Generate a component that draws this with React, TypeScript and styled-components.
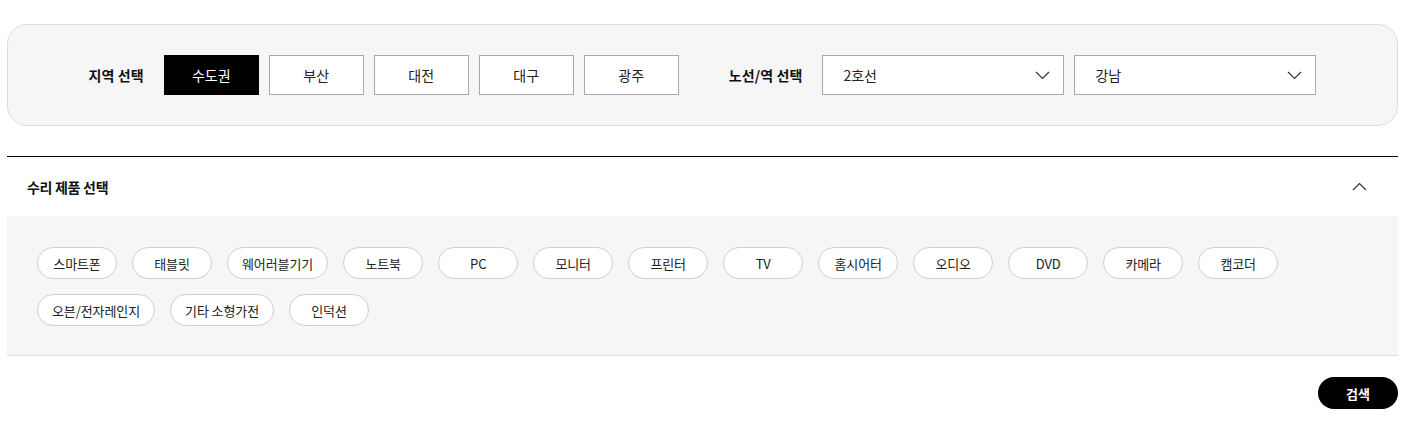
import React, { useState } from 'react';
import styled, { createGlobalStyle } from 'styled-components';

const GlobalStyle = createGlobalStyle`
  body {
    margin: 0;
    background: #fff;
    font-family: 'Noto Sans CJK KR', 'Noto Sans', sans-serif;
    color: #111;
  }
  * { box-sizing: border-box; }
`;

const Page = styled.div`
  padding: 24px 14px 0 7px;
`;

const FilterPanel = styled.div`
  height: 102px;
  background: #f6f6f6;
  border: 1px solid #dcdcdc;
  border-radius: 20px;
  display: flex;
  align-items: center;
  justify-content: center;
`;

const FilterGroup = styled.div`
  display: flex;
  align-items: center;
  gap: 10px;
  & + & { margin-left: 50px; }
`;

const Label = styled.span`
  font-size: 14px;
  font-weight: 700;
  letter-spacing: 0.1px;
  margin-right: 10px;
`;

const RegionButton = styled.button<{ $active?: boolean }>`
  width: 95px;
  height: 40px;
  border: 1px solid ${p => (p.$active ? '#000' : '#a8a8a8')};
  background: ${p => (p.$active ? '#000' : '#fff')};
  color: ${p => (p.$active ? '#fff' : '#222')};
  font-family: inherit;
  font-size: 14px;
  cursor: pointer;
  padding: 0;
`;

const Select = styled.button`
  width: 242px;
  height: 40px;
  border: 1px solid #a8a8a8;
  background: #fff;
  display: flex;
  align-items: center;
  justify-content: space-between;
  padding: 0 13px 0 20px;
  font-family: inherit;
  font-size: 14px;
  color: #222;
  cursor: pointer;
`;

const Section = styled.section`
  margin-top: 30px;
  border-top: 1px solid #000;
`;

const SectionHeader = styled.div`
  height: 59px;
  display: flex;
  align-items: center;
  justify-content: space-between;
  padding: 0 31px 0 20px;
  font-size: 14px;
  font-weight: 700;
  letter-spacing: -0.3px;
`;

const ChipArea = styled.div`
  background: #f6f6f6;
  border-bottom: 1px solid #dcdcdc;
  padding: 31px 30px 29px;
  display: flex;
  flex-wrap: wrap;
  gap: 15px 15px;
`;

const Chip = styled.button`
  min-width: 80px;
  height: 32px;
  padding: 0 14px;
  border: 1px solid #cfcfcf;
  border-radius: 16px;
  background: #fff;
  font-family: inherit;
  font-size: 13px;
  letter-spacing: -0.1px;
  color: #222;
  cursor: pointer;
`;

const Footer = styled.div`
  display: flex;
  justify-content: flex-end;
  padding-top: 21px;
`;

const SearchButton = styled.button`
  width: 80px;
  height: 32px;
  border: none;
  border-radius: 16px;
  background: #000;
  color: #fff;
  font-family: inherit;
  font-size: 13px;
  font-weight: 700;
  cursor: pointer;
`;

const Chevron = ({ up }: { up?: boolean }) => (
  <svg width="15" height="9" viewBox="0 0 15 9" fill="none">
    <path
      d={up ? 'M1 8 L7.5 1.5 L14 8' : 'M1 1 L7.5 7.5 L14 1'}
      stroke="#333"
      strokeWidth="1.2"
    />
  </svg>
);

const regions = ['수도권', '부산', '대전', '대구', '광주'];
const products = [
  '스마트폰', '태블릿', '웨어러블기기', '노트북', 'PC', '모니터', '프린터', 'TV',
  '홈시어터', '오디오', 'DVD', '카메라', '캠코더', '오븐/전자레인지', '기타 소형가전', '인덕션',
];

export default function App() {
  const [region, setRegion] = useState('수도권');
  const [open, setOpen] = useState(true);

  return (
    <Page>
      <GlobalStyle />
      <FilterPanel>
        <FilterGroup>
          <Label>지역 선택</Label>
          {regions.map(r => (
            <RegionButton key={r} $active={r === region} onClick={() => setRegion(r)}>
              {r}
            </RegionButton>
          ))}
        </FilterGroup>
        <FilterGroup>
          <Label>노선/역 선택</Label>
          <Select>
            2호선
            <Chevron />
          </Select>
          <Select>
            강남
            <Chevron />
          </Select>
        </FilterGroup>
      </FilterPanel>

      <Section>
        <SectionHeader onClick={() => setOpen(!open)}>
          수리 제품 선택
          <Chevron up={open} />
        </SectionHeader>
        {open && (
          <ChipArea>
            {products.map(p => (
              <Chip key={p}>{p}</Chip>
            ))}
          </ChipArea>
        )}
      </Section>

      <Footer>
        <SearchButton>검색</SearchButton>
      </Footer>
    </Page>
  );
}
